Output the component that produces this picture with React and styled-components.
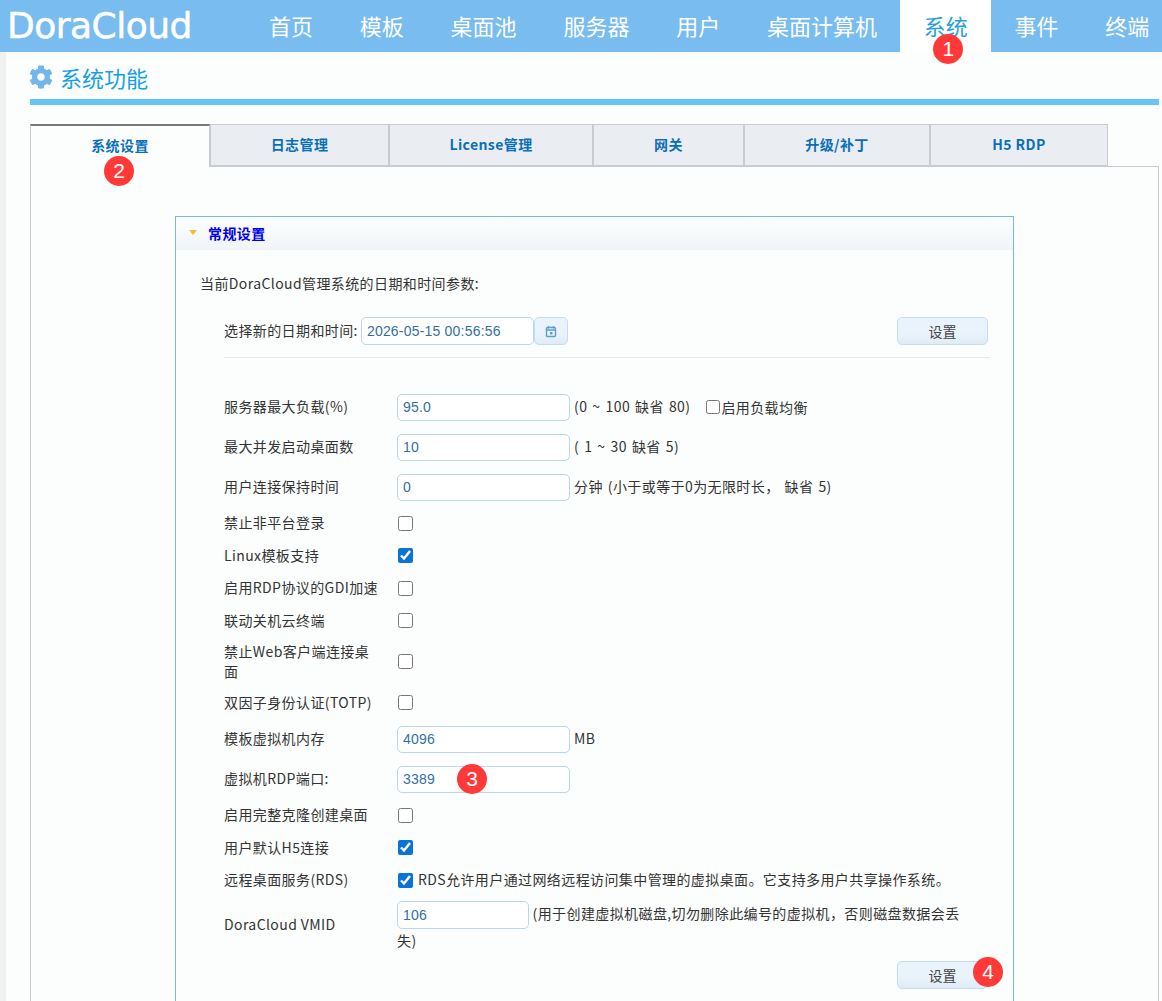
import React from 'react'
import styled, { createGlobalStyle } from 'styled-components'
import { FaCog } from 'react-icons/fa'

const navItems = ['首页', '模板', '桌面池', '服务器', '用户', '桌面计算机', '系统', '事件', '终端']
const tabItems = [
    { name: '系统设置', width: 180 },
    { name: '日志管理', width: 179 },
    { name: 'License管理', width: 204 },
    { name: '网关', width: 151 },
    { name: '升级/补丁', width: 186 },
    { name: 'H5 RDP', width: 178 },
]

function CheckRow({ label, checked, height }) {
    return (
        <Row $height={height}>
            <Label>{label}</Label>
            <Control><Check defaultChecked={checked} /></Control>
        </Row>
    )
}

function InputRow({ label, value, children }) {
    return (
        <Row $height={40}>
            <Label>{label}</Label>
            <Control>
                <Field defaultValue={value} />
                {children}
            </Control>
        </Row>
    )
}

function App() {
    return (
        <Page>
            <GlobalStyle />
            <Header>
                <Logo>DoraCloud</Logo>
                <Nav>
                    {navItems.map(item => (
                        <NavItem key={item} $active={item === '系统'}>
                            {item}
                            {item === '系统' && <Badge $left={33} $top={34}>1</Badge>}
                        </NavItem>
                    ))}
                </Nav>
            </Header>
            <Main>
                <TitleBar>
                    <GearIcon />
                    <h2>系统功能</h2>
                </TitleBar>
                <Tabs>
                    {tabItems.map((tab, i) => (
                        <Tab key={tab.name} $width={tab.width} $active={i === 0}>
                            {tab.name}
                            {i === 0 && <Badge $left={73} $top={30}>2</Badge>}
                        </Tab>
                    ))}
                </Tabs>
                <TabPanel>
                    <Card>
                        <CardHeader>
                            <Caret />
                            <span>常规设置</span>
                        </CardHeader>
                        <CardBody>
                            <Intro>当前DoraCloud管理系统的日期和时间参数:</Intro>
                            <DateRow>
                                <DateLabel>选择新的日期和时间:</DateLabel>
                                <DateField defaultValue="2026-05-15 00:56:56" />
                                <CalendarButton>
                                    <svg width="12" height="13" viewBox="0 0 12 13" fill="none">
                                        <rect x="1.5" y="2.5" width="9" height="9" rx="1" stroke="#5f9fd0" strokeWidth="1.4" />
                                        <path d="M1.5 5h9M3.5 1v2.5M8.5 1v2.5" stroke="#5f9fd0" strokeWidth="1.4" />
                                        <rect x="5" y="7" width="2.5" height="2.5" fill="#5f9fd0" />
                                    </svg>
                                </CalendarButton>
                                <DateSubmit>设置</DateSubmit>
                            </DateRow>
                            <Form>
                                <InputRow label="服务器最大负载(%)" value="95.0">
                                    <Hint>(0 ~ 100 缺省 80)</Hint>
                                    <InlineCheck><Check $small />启用负载均衡</InlineCheck>
                                </InputRow>
                                <InputRow label="最大并发启动桌面数" value="10">
                                    <Hint>( 1 ~ 30 缺省 5)</Hint>
                                </InputRow>
                                <InputRow label="用户连接保持时间" value="0">
                                    <Hint>分钟 (小于或等于0为无限时长， 缺省 5)</Hint>
                                </InputRow>
                                <CheckRow label="禁止非平台登录" height={32.5} />
                                <CheckRow label="Linux模板支持" height={32.5} checked />
                                <CheckRow label="启用RDP协议的GDI加速" height={32.5} />
                                <CheckRow label="联动关机云终端" height={32.5} />
                                <CheckRow label="禁止Web客户端连接桌面" height={49} />
                                <CheckRow label="双因子身份认证(TOTP)" height={33} />
                                <InputRow label="模板虚拟机内存" value="4096">
                                    <Hint>MB</Hint>
                                </InputRow>
                                <InputRow label="虚拟机RDP端口:" value="3389">
                                    <Badge $left={60} $top={-2}>3</Badge>
                                </InputRow>
                                <CheckRow label="启用完整克隆创建桌面" height={32.5} />
                                <CheckRow label="用户默认H5连接" height={32.5} checked />
                                <Row $height={32.5}>
                                    <Label>远程桌面服务(RDS)</Label>
                                    <Control>
                                        <Check defaultChecked />
                                        <Hint>RDS允许用户通过网络远程访问集中管理的虚拟桌面。它支持多用户共享操作系统。</Hint>
                                    </Control>
                                </Row>
                                <Row $height={56}>
                                    <Label>DoraCloud VMID</Label>
                                    <WrapControl>
                                        <Field $width={132} defaultValue="106" />
                                        {' '}(用于创建虚拟机磁盘,切勿删除此编号的虚拟机，否则磁盘数据会丢失)
                                    </WrapControl>
                                </Row>
                            </Form>
                            <Footer>
                                <SubmitWrap>
                                    <Button>设置</Button>
                                    <Badge $left={76} $top={-4}>4</Badge>
                                </SubmitWrap>
                            </Footer>
                        </CardBody>
                    </Card>
                </TabPanel>
            </Main>
        </Page>
    )
}

const uiFont = `"Noto Sans CJK SC", "Open Sans", sans-serif`

const GlobalStyle = createGlobalStyle`
html, body {
    margin: 0;
    height: 1001px;
    overflow: hidden;
    background: #fcfefd;
}
* {
    box-sizing: border-box;
}
`

const Page = styled.div`
height: 1001px;
overflow: hidden;
font-family: ${uiFont};
font-size: 14px;
letter-spacing: 0.4px;
color: #333;
`

const Header = styled.header`
display: flex;
height: 52px;
background: #78bcf0;
`

const Logo = styled.div`
flex: none;
width: 245.6px;
padding-left: 7px;
font-family: "DejaVu Sans", sans-serif;
font-size: 36px;
line-height: 52px;
letter-spacing: -0.5px;
color: #fff;
white-space: nowrap;
-webkit-text-stroke: 0.5px #fff;
`

const Nav = styled.nav`
display: flex;
flex: none;
white-space: nowrap;
letter-spacing: 0;
`

const NavItem = styled.div`
position: relative;
height: 52px;
padding: 0 23.4px;
font-size: 22px;
line-height: 51px;
color: ${props => (props.$active ? '#2a9fdc' : '#fff')};
background: ${props => (props.$active ? '#fff' : 'transparent')};
`

const Badge = styled.span`
position: absolute;
left: ${props => props.$left}px;
top: ${props => props.$top}px;
width: 30px;
height: 30px;
border-radius: 50%;
background: #ff3838;
color: #fff;
font-family: "Liberation Sans", sans-serif;
font-size: 21px;
font-weight: normal;
letter-spacing: 0;
line-height: 30px;
text-align: center;
z-index: 2;
`

const Main = styled.main`
height: 949px;
padding: 0 3px 0 24px;
border-left: 6px solid #f1f1f1;
`

const TitleBar = styled.div`
display: flex;
align-items: center;
gap: 7px;
height: 53px;
padding-top: 2px;
border-bottom: 6px solid #66c5f5;
h2 {
    margin: 0;
    font-size: 22px;
    font-weight: normal;
    letter-spacing: 0;
    color: #16a0e6;
}
`

const GearIcon = styled(FaCog)`
width: 24px;
height: 24px;
margin-left: -1px;
color: #73b6ea;
`

const Tabs = styled.div`
display: flex;
margin-top: 19px;
height: 42px;
`

const Tab = styled.div`
position: relative;
width: ${props => props.$width}px;
height: ${props => (props.$active ? '43px' : '42px')};
border: 1px solid #c8ccd0;
border-top: ${props => (props.$active ? '2px solid #777' : '1px solid #c8ccd0')};
border-bottom: ${props => (props.$active ? 'none' : '1px solid #c8ccd0')};
background: ${props => (props.$active ? '#fcfefd' : '#eaeef3')};
color: #0b6fb8;
font-weight: bold;
line-height: 39px;
text-align: center;
z-index: 1;
`

const TabPanel = styled.div`
height: 900px;
padding: 49px 0 0 144px;
border: 1px solid #c8ccd0;
`

const Card = styled.section`
width: 839px;
height: 900px;
border: 1px solid #7ab7e8;
`

const CardHeader = styled.div`
display: flex;
align-items: center;
height: 33px;
padding: 0 0 2px 13px;
background: linear-gradient(#fcfefd, #f1f4f8);
color: #0000ee;
font-weight: bold;
span {
    margin-left: 11px;
}
`

const Caret = styled.i`
width: 0;
height: 0;
border-left: 4px solid transparent;
border-right: 4px solid transparent;
border-top: 5px solid #fdb92e;
`

const CardBody = styled.div`
padding: 0 23px 0 24px;
`

const Intro = styled.p`
margin: 0;
height: 67px;
line-height: 66px;
`

const DateRow = styled.div`
position: relative;
display: flex;
align-items: center;
height: 41px;
margin-left: 24px;
padding-bottom: 12px;
border-bottom: 1px solid #e2e8ec;
`

const DateLabel = styled.span`
margin-right: 3px;
padding-bottom: 2px;
`

const Field = styled.input.attrs({ type: 'text' })`
width: ${props => props.$width || 173}px;
height: ${props => (props.$width ? 28 : 27)}px;
padding: 0 5px;
border: 1px solid #bcd6ea;
border-radius: 5px;
outline: none;
background: #fff;
color: #33709f;
font-family: "Liberation Sans", sans-serif;
font-size: 14px;
letter-spacing: 0.2px;
vertical-align: middle;
`

const DateField = styled(Field)`
height: 28px;
`

const Button = styled.button`
width: 91px;
height: 28px;
padding: 0;
border: 1px solid #c5dcee;
border-radius: 5px;
background: linear-gradient(#e8f3fc, #eaf3fb 60%, #dfebf6);
color: #444;
font-family: ${uiFont};
font-size: 14px;
`

const CalendarButton = styled(Button)`
display: flex;
align-items: center;
justify-content: center;
width: 34px;
`

const DateSubmit = styled(Button)`
margin-left: auto;
margin-right: 2px;
`

const Form = styled.div`
margin: 29px 0 0 24px;
`

const Row = styled.div`
display: flex;
align-items: center;
height: ${props => props.$height}px;
`

const Label = styled.div`
flex: none;
width: 173px;
padding: 0 15px 2px 0;
line-height: 20px;
`

const Control = styled.div`
position: relative;
display: flex;
align-items: center;
gap: 4px;
`

const WrapControl = styled.div`
width: 568px;
padding-top: 3px;
line-height: 22px;
`

const Hint = styled.span`
margin-right: 11px;
padding-bottom: 2px;
word-spacing: 1.5px;
white-space: nowrap;
`

const Check = styled.input.attrs({ type: 'checkbox' })`
width: ${props => (props.$small ? 14 : 15)}px;
height: ${props => (props.$small ? 14 : 15)}px;
margin: 0 1px;
accent-color: #0b73d6;
`

const InlineCheck = styled.label`
display: flex;
align-items: center;
`

const Footer = styled.div`
display: flex;
justify-content: flex-end;
margin-top: 8.5px;
padding-right: 2px;
`

const SubmitWrap = styled.div`
position: relative;
display: flex;
`

export default App
